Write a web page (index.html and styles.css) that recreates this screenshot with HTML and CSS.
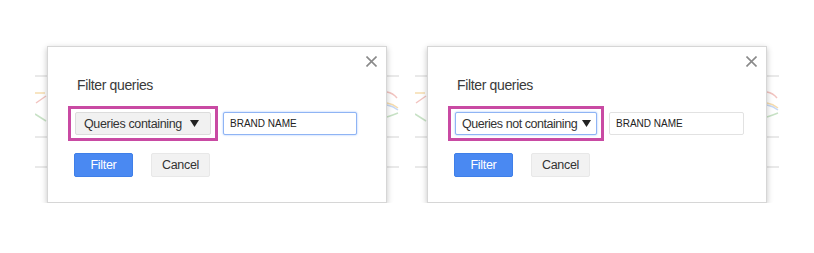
FILE: index.html
```html
<!DOCTYPE html>
<html>

<head>
    <title>Filter queries</title>
    <link rel="stylesheet" href="styles.css">
</head>

<body>

    <div class="stage">

        <!-- Dialog with the filter input focused -->
        <div class="panel">
            <svg class="chart" width="364" height="156" viewBox="0 0 364 156">
                <path class="grid" d="M0 30H364M0 91H364M0 121H364" />
                <path class="c-orange" d="M0 47H10" />
                <path class="c-red" d="M1 57L11 50" />
                <path class="c-green" d="M0 68L11 75" />
                <path class="c-red" d="M352 46Q358 47 362 52" />
                <path class="c-orange" d="M352 57Q358 58 363 62" />
                <path class="c-blue" d="M352 59Q358 60 363 64" />
                <path class="c-green" d="M352 71Q358 69 363 67" />
            </svg>
            <div class="dialog">
                <svg class="close" width="11" height="11" viewBox="0 0 11 11">
                    <path d="M0.5 0.5L10.5 10.5M10.5 0.5L0.5 10.5" />
                </svg>
                <div class="title">Filter queries</div>
                <div class="row">
                    <div class="highlight">
                        <div class="select select-short">
                            <span>Queries containing</span>
                            <svg class="caret" width="9" height="7" viewBox="0 0 9 7">
                                <path d="M0 0H9L4.5 7Z" />
                            </svg>
                        </div>
                    </div>
                    <input type="text" class="field focused" value="BRAND NAME">
                </div>
                <div class="actions">
                    <button class="btn btn-primary">Filter</button>
                    <button class="btn">Cancel</button>
                </div>
            </div>
        </div>

        <!-- Dialog with the dropdown focused -->
        <div class="panel">
            <svg class="chart" width="364" height="156" viewBox="0 0 364 156">
                <path class="grid" d="M0 30H364M0 91H364M0 121H364" />
                <path class="c-orange" d="M0 47H10" />
                <path class="c-red" d="M1 57L11 50" />
                <path class="c-green" d="M0 68L11 75" />
                <path class="c-red" d="M352 46Q358 47 362 52" />
                <path class="c-orange" d="M352 57Q358 58 363 62" />
                <path class="c-blue" d="M352 59Q358 60 363 64" />
                <path class="c-green" d="M352 71Q358 69 363 67" />
            </svg>
            <div class="dialog">
                <svg class="close" width="11" height="11" viewBox="0 0 11 11">
                    <path d="M0.5 0.5L10.5 10.5M10.5 0.5L0.5 10.5" />
                </svg>
                <div class="title">Filter queries</div>
                <div class="row">
                    <div class="highlight">
                        <div class="select select-long focused">
                            <span>Queries not containing</span>
                            <svg class="caret" width="9" height="7" viewBox="0 0 9 7">
                                <path d="M0 0H9L4.5 7Z" />
                            </svg>
                        </div>
                    </div>
                    <input type="text" class="field field-wide" value="BRAND NAME">
                </div>
                <div class="actions">
                    <button class="btn btn-primary">Filter</button>
                    <button class="btn">Cancel</button>
                </div>
            </div>
        </div>

    </div>

</body>

</html>
```

FILE: styles.css
```css
body {
    margin: 0;
    background: #fff;
    font-family: "Liberation Sans", Arial, sans-serif;
    color: #333;
}

.stage {
    display: flex;
    gap: 16px;
    padding: 46px 0 0 35px;
}

.panel {
    position: relative;
    padding: 0 12px;
}

.chart {
    position: absolute;
    left: 0;
    top: 0;
    fill: none;
    stroke-width: 1.5;
}

.chart .grid {
    stroke: #e9e9e9;
    stroke-width: 2;
}

.c-orange { stroke: #f6dcae; }
.c-red { stroke: #f2c4c0; }
.c-blue { stroke: #c6d8f4; }
.c-green { stroke: #c8e2c6; }

.dialog {
    position: relative;
    box-sizing: border-box;
    width: 340px;
    height: 157px;
    padding: 30px 0 0 20px;
    background: #fff;
    border: 1px solid #d6d6d6;
    box-shadow: 0 2px 6px rgba(0, 0, 0, 0.24);
}

.close {
    position: absolute;
    top: 9px;
    right: 9px;
    fill: none;
    stroke: #8a8a8a;
    stroke-width: 1.6;
}

.title {
    font-size: 14px;
    line-height: 16px;
    letter-spacing: -0.35px;
    padding-left: 9px;
    color: #3a3a3a;
}

.row {
    display: flex;
    align-items: center;
    gap: 5px;
    margin-top: 13px;
}

.highlight {
    border: 3px solid #c94aa3;
    padding: 3px 4px 3px 4px;
}

.select {
    box-sizing: border-box;
    display: flex;
    align-items: center;
    justify-content: space-between;
    height: 23px;
    padding: 0 8px 0 8px;
    font-size: 12.5px;
    letter-spacing: -0.35px;
    color: #333;
    background: #f1f1f1;
    border: 1px solid #dcdcdc;
    border-radius: 2px;
}

.select-short {
    width: 136px;
    padding-right: 11px;
}

.select-long {
    width: 142px;
    padding-left: 6px;
    padding-right: 5px;
    letter-spacing: -0.45px;
}

.select.focused {
    background: #fff;
    border-color: #8fb4f4;
    box-shadow: 0 0 2px rgba(77, 144, 254, 0.6);
}

.caret {
    fill: #222;
}

.field {
    box-sizing: border-box;
    width: 134px;
    height: 23px;
    margin: 0;
    padding: 0 6px;
    font-family: "Liberation Sans", Arial, sans-serif;
    font-size: 10px;
    color: #222;
    background: #fff;
    border: 1px solid #e2e2e2;
    border-radius: 2px;
    outline: none;
}

.field-wide {
    width: 135px;
}

.field.focused {
    border-color: #8fb4f4;
    box-shadow: 0 0 2px rgba(77, 144, 254, 0.6);
}

.actions {
    display: flex;
    gap: 18px;
    margin-top: 12px;
    padding-left: 6px;
}

.btn {
    box-sizing: border-box;
    width: 59px;
    height: 24px;
    padding: 0;
    font-family: "Liberation Sans", Arial, sans-serif;
    font-size: 12.5px;
    letter-spacing: -0.3px;
    color: #333;
    background: #f2f2f2;
    border: 1px solid #e8e8e8;
    border-radius: 2px;
}

.btn-primary {
    color: #fff;
    background: #4a89f2;
    border-color: #3f7fe8;
}
```
